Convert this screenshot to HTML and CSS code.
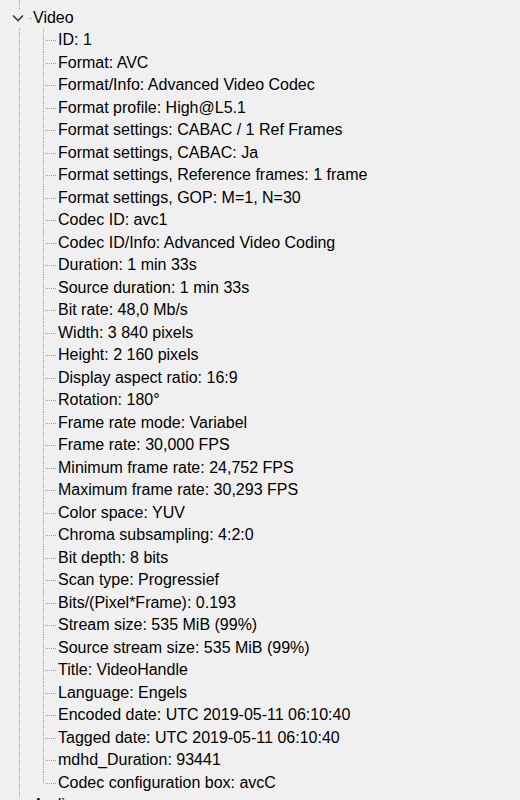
FILE: index.html
```html
<!DOCTYPE html>
<html>
<head>
<meta charset="utf-8">
<link rel="stylesheet" href="styles.css">
</head>
<body>
<div class="tree">
  <ul class="children">
    <li class="row last"><span class="guide"></span><span class="label">com.android.version: 10.0.0</span></li>
  </ul>
  <div class="node">
    <div class="row">
      <span class="twisty"><svg width="12" height="8" viewBox="0 0 12 8"><polyline points="1,1.5 6,6.5 11,1.5" fill="none" stroke="#3c3c3c" stroke-width="1.6"/></svg></span>
      <span class="stub"></span>
      <span class="label">Video</span>
    </div>
    <ul class="children">
      <li class="row"><span class="guide"></span><span class="label">ID: 1</span></li>
      <li class="row"><span class="guide"></span><span class="label">Format: AVC</span></li>
      <li class="row"><span class="guide"></span><span class="label">Format/Info: Advanced Video Codec</span></li>
      <li class="row"><span class="guide"></span><span class="label">Format profile: High@L5.1</span></li>
      <li class="row"><span class="guide"></span><span class="label">Format settings: CABAC / 1 Ref Frames</span></li>
      <li class="row"><span class="guide"></span><span class="label">Format settings, CABAC: Ja</span></li>
      <li class="row"><span class="guide"></span><span class="label">Format settings, Reference frames: 1 frame</span></li>
      <li class="row"><span class="guide"></span><span class="label">Format settings, GOP: M=1, N=30</span></li>
      <li class="row"><span class="guide"></span><span class="label">Codec ID: avc1</span></li>
      <li class="row"><span class="guide"></span><span class="label">Codec ID/Info: Advanced Video Coding</span></li>
      <li class="row"><span class="guide"></span><span class="label">Duration: 1 min 33s</span></li>
      <li class="row"><span class="guide"></span><span class="label">Source duration: 1 min 33s</span></li>
      <li class="row"><span class="guide"></span><span class="label">Bit rate: 48,0 Mb/s</span></li>
      <li class="row"><span class="guide"></span><span class="label">Width: 3 840 pixels</span></li>
      <li class="row"><span class="guide"></span><span class="label">Height: 2 160 pixels</span></li>
      <li class="row"><span class="guide"></span><span class="label">Display aspect ratio: 16:9</span></li>
      <li class="row"><span class="guide"></span><span class="label">Rotation: 180°</span></li>
      <li class="row"><span class="guide"></span><span class="label">Frame rate mode: Variabel</span></li>
      <li class="row"><span class="guide"></span><span class="label">Frame rate: 30,000 FPS</span></li>
      <li class="row"><span class="guide"></span><span class="label">Minimum frame rate: 24,752 FPS</span></li>
      <li class="row"><span class="guide"></span><span class="label">Maximum frame rate: 30,293 FPS</span></li>
      <li class="row"><span class="guide"></span><span class="label">Color space: YUV</span></li>
      <li class="row"><span class="guide"></span><span class="label">Chroma subsampling: 4:2:0</span></li>
      <li class="row"><span class="guide"></span><span class="label">Bit depth: 8 bits</span></li>
      <li class="row"><span class="guide"></span><span class="label">Scan type: Progressief</span></li>
      <li class="row"><span class="guide"></span><span class="label">Bits/(Pixel*Frame): 0.193</span></li>
      <li class="row"><span class="guide"></span><span class="label">Stream size: 535 MiB (99%)</span></li>
      <li class="row"><span class="guide"></span><span class="label">Source stream size: 535 MiB (99%)</span></li>
      <li class="row"><span class="guide"></span><span class="label">Title: VideoHandle</span></li>
      <li class="row"><span class="guide"></span><span class="label">Language: Engels</span></li>
      <li class="row"><span class="guide"></span><span class="label">Encoded date: UTC 2019-05-11 06:10:40</span></li>
      <li class="row"><span class="guide"></span><span class="label">Tagged date: UTC 2019-05-11 06:10:40</span></li>
      <li class="row"><span class="guide"></span><span class="label">mdhd_Duration: 93441</span></li>
      <li class="row last"><span class="guide"></span><span class="label">Codec configuration box: avcC</span></li>
    </ul>
  </div>
  <div class="node">
    <div class="row">
      <span class="twisty"><svg width="12" height="12" viewBox="0 0 12 12"><polyline points="4,1 9,6 4,11" fill="none" stroke="#3c3c3c" stroke-width="1.6"/></svg></span>
      <span class="stub"></span>
      <span class="label">Audio</span>
    </div>
  </div>
</div>
</body>
</html>
```
FILE: styles.css
```css
html, body {
  margin: 0;
  padding: 0;
  background: #f0f0f0;
  overflow: hidden;
}

.tree {
  margin-top: -15.75px;
  font-family: "Liberation Sans", Arial, sans-serif;
  font-size: 16px;
  color: #000;
  background-image: repeating-linear-gradient(to bottom, #a0a0a0 0 1px, transparent 1px 2px);
  background-size: 1px 100%;
  background-position: 19px 0;
  background-repeat: no-repeat;
}

ul {
  list-style: none;
  margin: 0;
  padding: 0;
}

.children {
  margin-left: 43px;
}

.row {
  display: flex;
  align-items: stretch;
  height: 22.5px;
  line-height: 22.5px;
  white-space: nowrap;
}

.label {
  display: block;
}

.guide {
  flex: 0 0 15px;
  background-image:
    repeating-linear-gradient(to bottom, #a0a0a0 0 1px, transparent 1px 2px),
    repeating-linear-gradient(to right, #a0a0a0 0 1px, transparent 1px 2px);
  background-size: 1px 100%, 11px 1px;
  background-position: 0 0, 2px 11px;
  background-repeat: no-repeat;
}

.last .guide {
  background-size: 1px 11px, 11px 1px;
}

.twisty {
  flex: 0 0 14px;
  margin-left: 11px;
  display: flex;
  align-items: center;
  justify-content: center;
  background: #f0f0f0;
  height: 18px;
  align-self: center;
}

.stub {
  flex: 0 0 8px;
  background-image: repeating-linear-gradient(to right, #a0a0a0 0 1px, transparent 1px 2px);
  background-size: 3px 1px;
  background-position: 4px 11px;
  background-repeat: no-repeat;
}
```
